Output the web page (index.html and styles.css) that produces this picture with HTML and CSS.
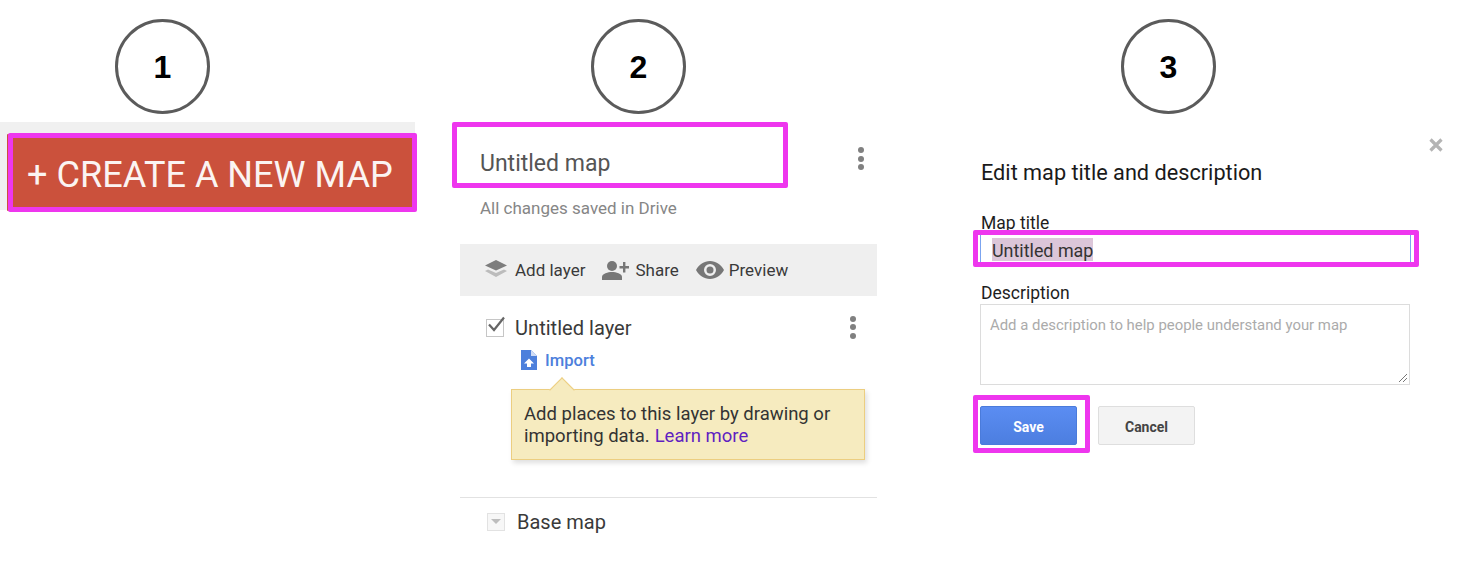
FILE: index.html
```html
<!DOCTYPE html>
<html lang="en">
<head>
<meta charset="utf-8">
<title>Create a new map steps</title>
<link rel="stylesheet" href="styles.css">
</head>
<body>
<main class="page">
  <section class="col col-one">
    <div class="step step-one">1</div>
    <div class="strip">
      <div class="create-btn">+ CREATE A NEW MAP</div>
    </div>
  </section>

  <section class="col col-two">
    <div class="step step-two">2</div>
    <div class="map-head">
      <div class="map-title-box">Untitled map</div>
      <span class="kebab"><i></i><i></i><i></i></span>
    </div>
    <p class="saved">All changes saved in Drive</p>
    <div class="toolbar">
      <span class="tool tool-add">
        <svg class="ico-layers" viewBox="0 0 24 20" width="24" height="20"><path d="M12 10.500 1 5.500 12 0l11 5.500z" fill="#7d7d7d"/><path d="M4 9.500 12 13l8-3.500 3 1.500-11 6-11-6z" fill="#bcbcbc"/></svg>
        Add layer
      </span>
      <span class="tool tool-share">
        <svg viewBox="0 0 28 20" width="28" height="20"><circle cx="10" cy="6" r="5" fill="#777"/><path d="M0 20v-3c0-3.500 6-5 10-5s10 1.500 10 5v3z" fill="#777"/><path d="M21 2h2.400v4H27v2.400h-3.600v4H21v-4h-3.500V6H21z" fill="#777"/></svg>
        Share
      </span>
      <span class="tool tool-preview">
        <svg viewBox="0 0 28 18" width="28" height="18"><path fill-rule="evenodd" d="M14 0C8 0 3 3.700 0 9c3 5.300 8 9 14 9s11-3.700 14-9c-3-5.300-8-9-14-9zm0 15a6 6 0 1 1 0-12 6 6 0 0 1 0 12z" fill="#777"/><circle cx="14" cy="9" r="3.500" fill="#777"/></svg>
        Preview
      </span>
    </div>
    <div class="layer-row">
      <span class="check">
        <svg viewBox="0 0 20 18" width="20" height="18"><path d="M3 8.500 8 14 18 1.500" fill="none" stroke="#666" stroke-width="2.200"/></svg>
      </span>
      <span class="layer-name">Untitled layer</span>
      <span class="kebab"><i></i><i></i><i></i></span>
    </div>
    <div class="import">
      <svg viewBox="0 0 16 20" width="16" height="20"><path d="M0 0h10l6 6v14H0z" fill="#4d80dc"/><path d="M10 0l6 6h-6z" fill="#cfdcf5"/><path d="M8 8.500l5 5h-3v3.500H6v-3.500H3z" fill="#fff"/></svg>
      <span>Import</span>
    </div>
    <div class="tip">
      <div>Add places to this layer by drawing or</div>
      <div class="tip-second"><span>importing data.</span><span class="tip-link">Learn more</span></div>
    </div>
    <div class="base-row">
      <span class="base-box"></span>
      <span class="base-name">Base map</span>
    </div>
  </section>

  <section class="col col-three">
    <div class="step step-three">3</div>
    <div class="close-row">
      <svg viewBox="0 0 14 14" width="14" height="14"><path d="M1.500 1.500l11 11M12.500 1.500l-11 11" stroke="#b4b4b4" stroke-width="3.200"/></svg>
    </div>
    <h2 class="dialog-title">Edit map title and description</h2>
    <div class="field-label label-title">Map title</div>
    <div class="mark mark-input">
      <div class="input"><span class="selected">Untitled map</span></div>
    </div>
    <div class="field-label label-desc">Description</div>
    <div class="textarea">
      Add a description to help people understand your map
      <svg class="grip" viewBox="0 0 10 10" width="10" height="10"><path d="M1 9l8-8M5 9l4-4" stroke="#777" stroke-width="1"/></svg>
    </div>
    <div class="actions">
      <div class="mark mark-save"><div class="btn btn-save">Save</div></div>
      <div class="btn btn-cancel">Cancel</div>
    </div>
  </section>
</main>
</body>
</html>
```

FILE: styles.css
```css
* { box-sizing: border-box; }
html, body { margin: 0; background: #fff; }
body { font-family: Roboto, "Liberation Sans", sans-serif; color: #333; overflow: hidden; }
.page { display: flex; width: 1474px; height: 580px; padding-top: 19px; }
.col { display: flex; flex-direction: column; flex: none; }
.col-one { width: 452px; }
.col-two { width: 521px; }
.col-three { width: 501px; }

.step {
  width: 95px; height: 95px; flex: none;
  border: 3px solid #5b5b5b; border-radius: 50%;
  display: flex; align-items: center; justify-content: center; padding-top: 2px;
  font: 700 32px "Liberation Sans", Arial, sans-serif; color: #000;
}
.step-one { margin-left: 115px; }
.step-two { margin-left: 139px; }
.step-three { margin-left: 148px; }

.strip { width: 415px; height: 88px; margin-top: 8px; padding-top: 11px; background: #f0f0f0; }
.create-btn {
  width: 409px; height: 79px; margin-left: 8px;
  background: #cb513c; border: 5px solid #ee36ee; border-radius: 2px;
  box-shadow: -2px 0 0 -1px #cb513c;
  color: #fbf4f2; font-size: 36.100px; line-height: 75px; padding-left: 14px; white-space: nowrap;
}

.map-head { display: flex; align-items: center; margin-top: 8px; height: 66px; }
.map-title-box {
  width: 336px; height: 66px;
  border: 5px solid #ee36ee; border-radius: 2px;
  padding-left: 23px; font-size: 23px; line-height: 74px; color: #555;
}
.kebab { display: flex; flex-direction: column; gap: 2.500px; flex: none; }
.kebab i { width: 6px; height: 6px; border-radius: 50%; background: #808080; display: block; }
.map-head .kebab { margin-left: 70px; margin-top: 7px; }
.saved { margin: 10px 0 0 28px; font-size: 17px; line-height: 20px; color: #868686; }

.toolbar {
  display: flex; align-items: center; height: 52px; width: 417px;
  margin: 26px 0 0 8px; padding-left: 24px; background: #efefef;
  font-size: 17px; color: #3a3a3a;
}
.tool { display: flex; align-items: center; }
.tool svg { flex: none; }
.tool-add svg { margin-right: 7px; }
.tool-share { margin-left: 17px; }
.tool-share svg { margin-right: 5px; }
.tool-preview { margin-left: 17px; }
.tool-preview svg { margin-right: 5px; }

.layer-row { display: flex; align-items: center; height: 24px; margin-top: 20px; margin-left: 34px; }
.check { width: 18px; height: 18px; border: 1.500px solid #c6c6c6; flex: none; position: relative; }
.check svg { position: absolute; left: -1px; top: -4px; }
.layer-name { margin-left: 11px; font-size: 20.100px; color: #3a3a3a; width: 335px; flex: none; }
.layer-row .kebab { margin-top: -2px; }

.import { display: flex; align-items: center; gap: 8px; height: 20px; margin: 10px 0 0 69px; font-size: 16.600px; font-weight: 500; color: #4d80dc; }

.tip {
  position: relative; width: 354px; height: 71px;
  margin: 19px 0 0 59px; padding: 13px 12px 0;
  background: #f6ebbf; border: 1.500px solid #ecce80;
  box-shadow: 2px 3px 5px rgba(0,0,0,.13);
  font-size: 18.500px; line-height: 22px; color: #333; white-space: nowrap;
}
.tip::before {
  content: ""; position: absolute; left: 41px; top: -9px;
  width: 17px; height: 17px; transform: rotate(45deg);
  background: #f6ebbf; border-left: 1.500px solid #ecce80; border-top: 1.500px solid #ecce80;
}
.tip-second { display: flex; gap: 5px; }
.tip-link { color: #5f1fc1; }

.base-row {
  display: flex; align-items: center; width: 417px; height: 48px;
  margin: 37px 0 0 8px; padding-left: 27px; border-top: 1.500px solid #e2e2e2;
}
.base-box {
  position: relative; width: 18px; height: 18px; flex: none;
  border: 1px solid #e2e2e2; background: #f7f7f7;
}
.base-box::after {
  content: ""; position: absolute; left: 3px; top: 5px;
  border-left: 5px solid transparent; border-right: 5px solid transparent; border-top: 5px solid #bdbdbd;
}
.base-name { margin-left: 12px; font-size: 20px; color: #3a3a3a; }

.close-row { display: flex; justify-content: flex-end; width: 470px; margin-top: 24px; height: 14px; }
.dialog-title { margin: 9px 0 0 8px; font-size: 21.700px; line-height: 24px; font-weight: 400; color: #1a1a1a; }
.field-label { margin-left: 8px; font-size: 17.500px; line-height: 18px; color: #1e1e1e; }
.label-title { margin-top: 29px; height: 18px; }
.mark { border: 5px solid #ee36ee; border-radius: 2px; }
.mark-input { width: 446px; height: 37px; margin-top: -2px; position: relative; padding: 0 4px 0 2px; }
.input {
  width: 431px; height: 27px;
  border-left: 1.500px solid #7ba4f0; border-right: 1.500px solid #7ba4f0;
  padding: 3px 0 0 11px; background: #fff;
  font-size: 17.900px; line-height: 23px; color: #333;
}
.selected { display: inline-block; height: 23px; line-height: 25px; background: #dcc6d9; }
.label-desc { margin-top: 17px; }
.textarea {
  position: relative; width: 430px; height: 81px;
  margin: 2px 0 0 7px; padding: 11px 9px;
  border: 1.500px solid #dcdcdc;
  font-size: 14.900px; line-height: 18px; color: #ababab;
}
.grip { position: absolute; right: 1px; bottom: 1px; }
.actions { display: flex; align-items: flex-start; margin-top: 10px; }
.mark-save { width: 117px; height: 58px; padding: 6px 0 0 2px; }
.btn {
  width: 97px; height: 39px; border-radius: 2px; padding-top: 2px;
  display: flex; align-items: center; justify-content: center;
  font-size: 14px; font-weight: 700;
}
.btn-save { background: linear-gradient(#5b8df2, #4c7ee0); border: 1px solid #4a7bdb; color: #fff; }
.btn-cancel { margin: 11px 0 0 8px; background: #f3f3f3; border: 1px solid #dedede; color: #444; }
```
